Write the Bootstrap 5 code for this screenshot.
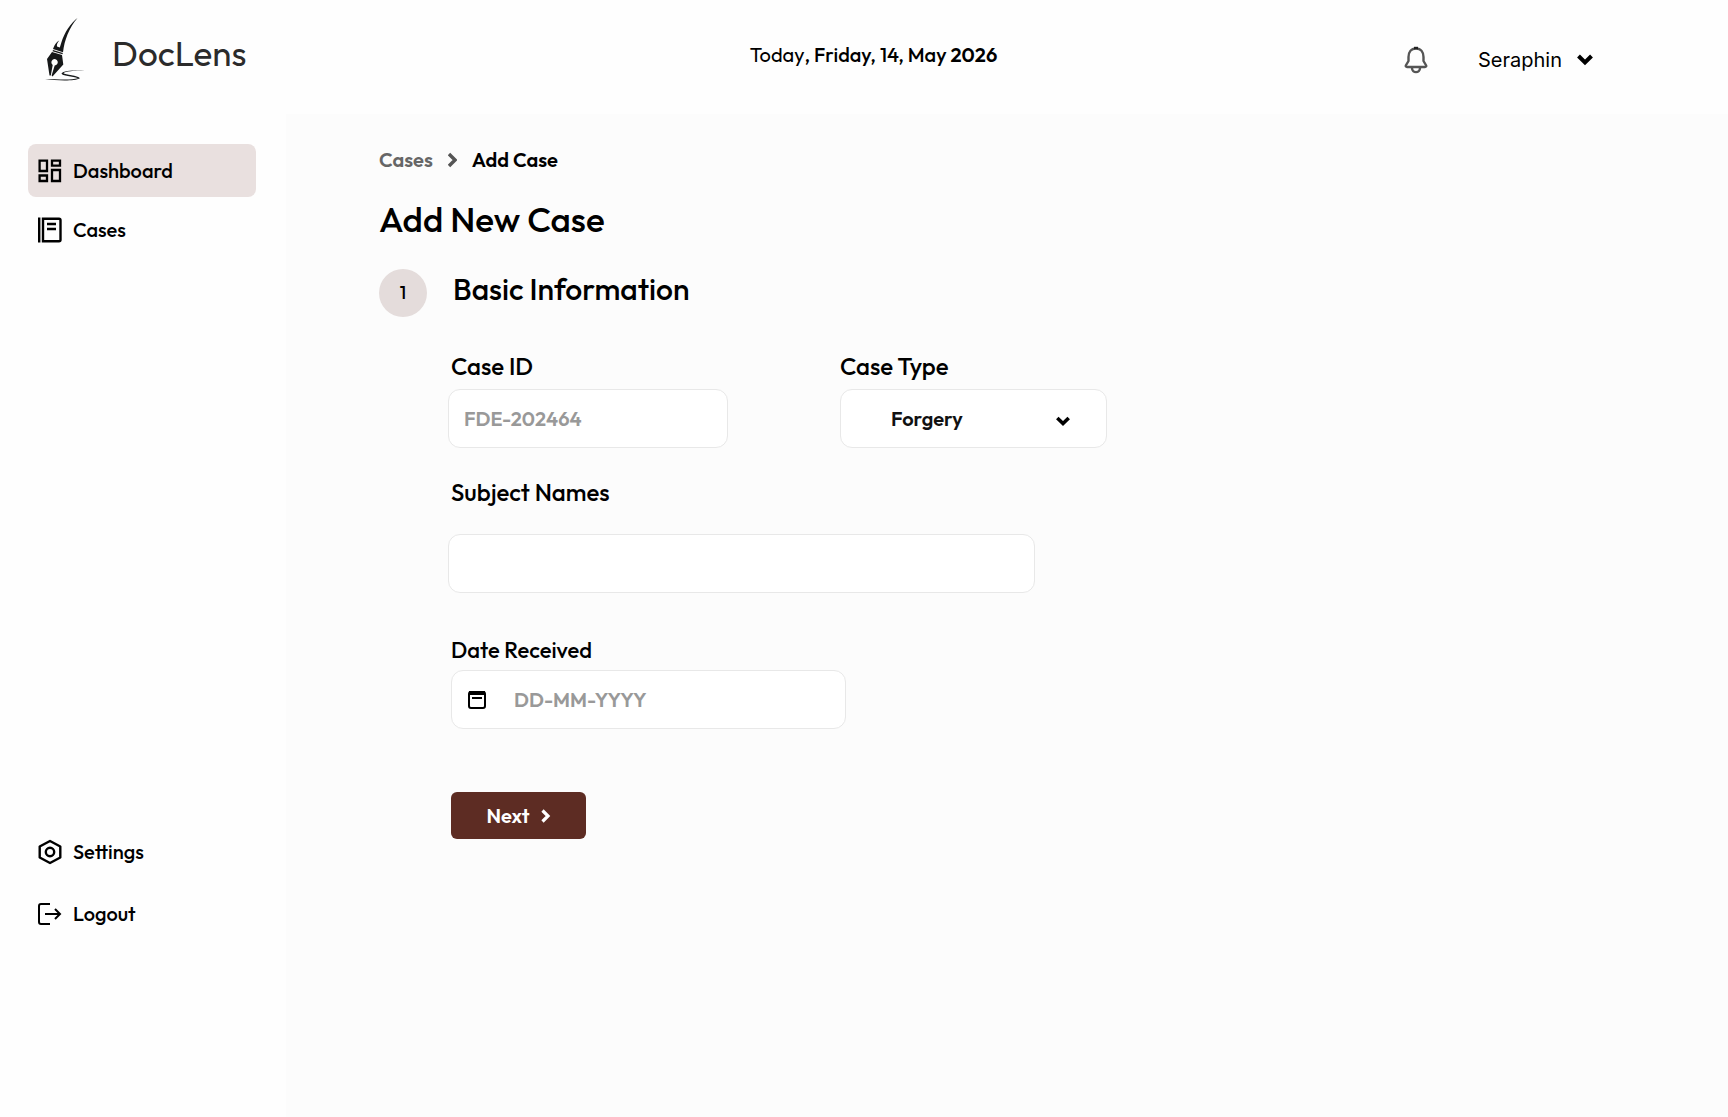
<!DOCTYPE html>
<html lang="en">
<head>
<meta charset="utf-8">
<meta name="viewport" content="width=device-width, initial-scale=1">
<title>DocLens - Add New Case</title>
<link href="https://cdn.jsdelivr.net/npm/bootstrap@5.3.0/dist/css/bootstrap.min.css" rel="stylesheet">
<style>
  body { font-family: Outfit, Lato, "Open Sans", sans-serif; font-size: 20px; line-height: 28px; font-weight: 500; color: #000; background: #fefefe; }
  a { color: inherit; text-decoration: none; }
  svg { flex-shrink: 0; display: block; }
  .topbar { height: 114px; padding: 0 135px 4px 44px; }
  .topbar-side { flex: 1 1 0; }
  .brand-text { font-size: 35px; line-height: 44px; font-weight: 400; color: #2b2b2b; gap: 25px; }
  .brand-text span { padding-bottom: 4px; }
  .brand-text svg { margin-bottom: 10px; }
  .today { padding-left: 110px; }
  .today .day-word { font-weight: 400; }
  .today .year { font-weight: 600; }
  .user-tools { gap: 50px; padding-top: 10px; }
  .user-menu { font-family: Inter, sans-serif; font-size: 20px; font-weight: 400; gap: 15px; color: #000; }
  .sidebar { width: 286px; padding: 30px 30px 177px 28px; }
  .side-link { height: 53px; padding: 0 10px; gap: 11px; border-radius: 8px; color: #000; }
  .side-link.active { background: #e9e0df; }
  .side-group { gap: 6px; }
  .side-foot { gap: 9px; }
  .content { background: #fcfcfc; padding: 32px 40px 40px 93px; }
  .trail { gap: 15px; font-size: 20px; font-weight: 600; }
  .trail a { color: #666; }
  .page-title { font-size: 35px; line-height: 44px; font-weight: 500; margin: 23px 0 28px; }
  .step-head { gap: 26px; }
  .step-no { width: 48px; height: 48px; border-radius: 50%; background: #e4dcdb; font-size: 18px; }
  .step-title { font-size: 30px; line-height: 40px; font-weight: 500; }
  .fields { padding: 34px 0 0 69px; }
  .field-label { font-size: 24px; line-height: 30px; padding-left: 3px; margin-bottom: 8px; display: block; }
  .pair { gap: 112px; margin-bottom: 29px; }
  .box { height: 59px; border: 1px solid #e8e8e8; border-radius: 12px; background: #fff; font-size: 20px; font-weight: 600; color: #111; padding: 0 15px; }
  .box::placeholder { color: #999; opacity: 1; }
  .w-id { width: 280px; }
  .w-type { width: 267px; }
  .w-names { width: 587px; max-width: 100%; }
  .w-date { width: 395px; }
  .type-select { padding-left: 46px; appearance: none; text-indent: 4px; }
  .select-arrow { top: 27px; right: 37px; pointer-events: none; }
  .names-label { margin-bottom: 27px; }
  .date-part { padding-left: 3px; margin: 42px 0 63px; }
  .date-part .field-label { font-size: 22px; padding-left: 0; margin-bottom: 5px; }
  .date-input { padding-left: 62px; }
  .date-icon { top: 20px; left: 17px; pointer-events: none; }
  .next-btn { height: 47px; width: 135px; gap: 11px; margin-left: 3px; border-radius: 6px; background: #5d2c23; color: #fff; font-size: 20px; font-weight: 600; padding: 0; }
  .next-btn:hover { background: #4b221a; color: #fff; }
</style>
<script src="https://cdn.jsdelivr.net/npm/bootstrap@5.3.0/dist/js/bootstrap.bundle.min.js"></script>
</head>
<body>
<div class="d-flex flex-column min-vh-100">
  <header class="topbar d-flex align-items-center">
    <div class="topbar-side">
      <a href="#" class="brand-text d-inline-flex align-items-center">
        <svg width="43" height="66" viewBox="0 0 43 66" fill="#161819" aria-hidden="true">
          <path d="M33.500 1C27 6 20.500 15 17.200 26L15.800 30.500L13 29.500C12.500 27.500 13.500 25.500 15.300 23.500C11.500 25.500 10.500 28.500 9 32L19 35.200C20.500 23 25 11 33.500 1Z"/>
          <path d="M9 33L18.800 36L18.500 37.200L8.500 34.300Z"/>
          <path fill-rule="evenodd" d="M8 35L18 38L19.300 47.500L8.500 59.500L7.600 58.500L10.700 48.500A3.200 3.200 0 1 0 8.700 47.900L6.800 58.500H5.500L3 42Z"/>
          <path d="M1 62C12 61.900 26 63.600 34 61.200C29 59 17.500 59 17.500 56.500C19 53.500 30 52.800 41 53.300C30 53.600 21 54.500 19.500 56.300C21 57.800 34 58.500 36 61.200C30 64.500 12 63.500 1 62Z"/>
        </svg>
        <span>DocLens</span>
      </a>
    </div>
    <div class="today"><span class="day-word">Today</span>, Friday, 14, May <span class="year">2026</span></div>
    <div class="topbar-side user-tools d-flex justify-content-end align-items-center">
      <button type="button" class="btn p-0 border-0" aria-label="Notifications">
        <svg width="24" height="28" viewBox="0 0 24 28" fill="none" stroke="#555" stroke-width="2.400" stroke-linejoin="round"><path d="M12 2.500C7 2.500 4.500 6.500 4.500 11V15L1.800 19.500Q1.500 21 3 21H21Q22.500 21 22.200 19.500L19.500 15V11C19.500 6.500 17 2.500 12 2.500Z"/><path d="M8 22C8 27.500 16 27.500 16 22"/><path d="M10 2H14" stroke="#222"/></svg>
      </button>
      <button type="button" class="user-menu btn p-0 border-0 d-flex align-items-center">Seraphin
        <svg width="16" height="12" viewBox="0 0 16 12" fill="none" stroke="#000" stroke-width="4"><path d="M1.500 2L8 8.500L14.500 2"/></svg>
      </button>
    </div>
  </header>
  <div class="d-flex flex-grow-1">
    <nav class="sidebar flex-shrink-0 d-flex flex-column justify-content-between" aria-label="Main">
      <div class="side-group d-flex flex-column">
        <a href="#" class="side-link active d-flex align-items-center">
          <svg width="24" height="24" viewBox="0 0 24 24" fill="none" stroke="#000" stroke-width="2.300"><path d="M1.600 1.600H9V12H1.600ZM14 1.600H22V6.700H14ZM14 11H22V22H14ZM1.600 16.500H9V22H1.600Z"/></svg>
          Dashboard</a>
        <a href="#" class="side-link d-flex align-items-center">
          <svg width="24" height="26" viewBox="0 0 24 26" fill="none" stroke="#000" stroke-width="2.400"><path d="M1.200 .5V25.500"/><path d="M5 1.700H21Q22.500 1.700 22.500 3.200V22.800Q22.500 24.300 21 24.300H5Z"/><path d="M9 7H18M9 12H18"/></svg>
          Cases</a>
      </div>
      <div class="side-foot d-flex flex-column">
        <a href="#" class="side-link d-flex align-items-center">
          <svg width="24" height="26" viewBox="0 0 24 26" fill="none" stroke="#000" stroke-width="2.400" stroke-linejoin="round"><path d="M12 2L22.300 7.500V18.500L12 24L1.700 18.500V7.500Z"/><circle cx="12" cy="13" r="4.200"/></svg>
          Settings</a>
        <a href="#" class="side-link d-flex align-items-center">
          <svg width="24" height="24" viewBox="0 0 24 24" fill="none" stroke="#000" stroke-width="2"><path d="M12 2H3Q1 2 1 4V20Q1 22 3 22H12"/><path d="M7 12H22M17 7L22 12L17 17"/></svg>
          Logout</a>
      </div>
    </nav>
    <main class="content flex-grow-1">
      <nav class="trail d-flex align-items-center" aria-label="Breadcrumb">
        <a href="#">Cases</a>
        <svg width="9" height="16" viewBox="0 0 9 16" fill="none" stroke="#555" stroke-width="3.400"><path d="M1 2L7 8L1 14"/></svg>
        <span aria-current="page">Add Case</span>
      </nav>
      <h1 class="page-title">Add New Case</h1>
      <div class="step-head d-flex align-items-start">
        <span class="step-no d-flex align-items-center justify-content-center">1</span>
        <h2 class="step-title mb-0">Basic Information</h2>
      </div>
      <form class="fields">
        <div class="pair d-flex flex-wrap">
          <div>
            <label class="field-label" for="caseId">Case ID</label>
            <input id="caseId" class="box w-id" type="text" placeholder="FDE-202464">
          </div>
          <div>
            <label class="field-label ps-0" for="caseType">Case Type</label>
            <div class="position-relative w-type">
              <select id="caseType" class="box w-type type-select"><option>Forgery</option></select>
              <svg class="select-arrow position-absolute" width="14" height="11" viewBox="0 0 14 11" fill="none" stroke="#000" stroke-width="3.600"><path d="M1.300 2L7 7.500L12.700 2"/></svg>
            </div>
          </div>
        </div>
        <label class="field-label names-label" for="names">Subject Names</label>
        <input id="names" class="box w-names d-block" type="text">
        <div class="date-part">
          <label class="field-label" for="received">Date Received</label>
          <div class="position-relative w-date">
            <input id="received" class="box w-date date-input d-block" type="text" placeholder="DD-MM-YYYY">
            <svg class="date-icon position-absolute" width="18" height="19" viewBox="0 0 18 19" fill="none" stroke="#000" stroke-width="2"><rect x="1" y="2" width="16" height="16" rx="2"/><path d="M1 3H17" stroke-width="4"/><path d="M4 8H14"/></svg>
          </div>
        </div>
        <button type="button" class="next-btn btn d-flex align-items-center justify-content-center">Next
          <svg width="10" height="14" viewBox="0 0 10 14" fill="none" stroke="#fff" stroke-width="3.200"><path d="M1.500 1.500L7 7L1.500 12.500"/></svg>
        </button>
      </form>
    </main>
  </div>
</div>
</body>
</html>
